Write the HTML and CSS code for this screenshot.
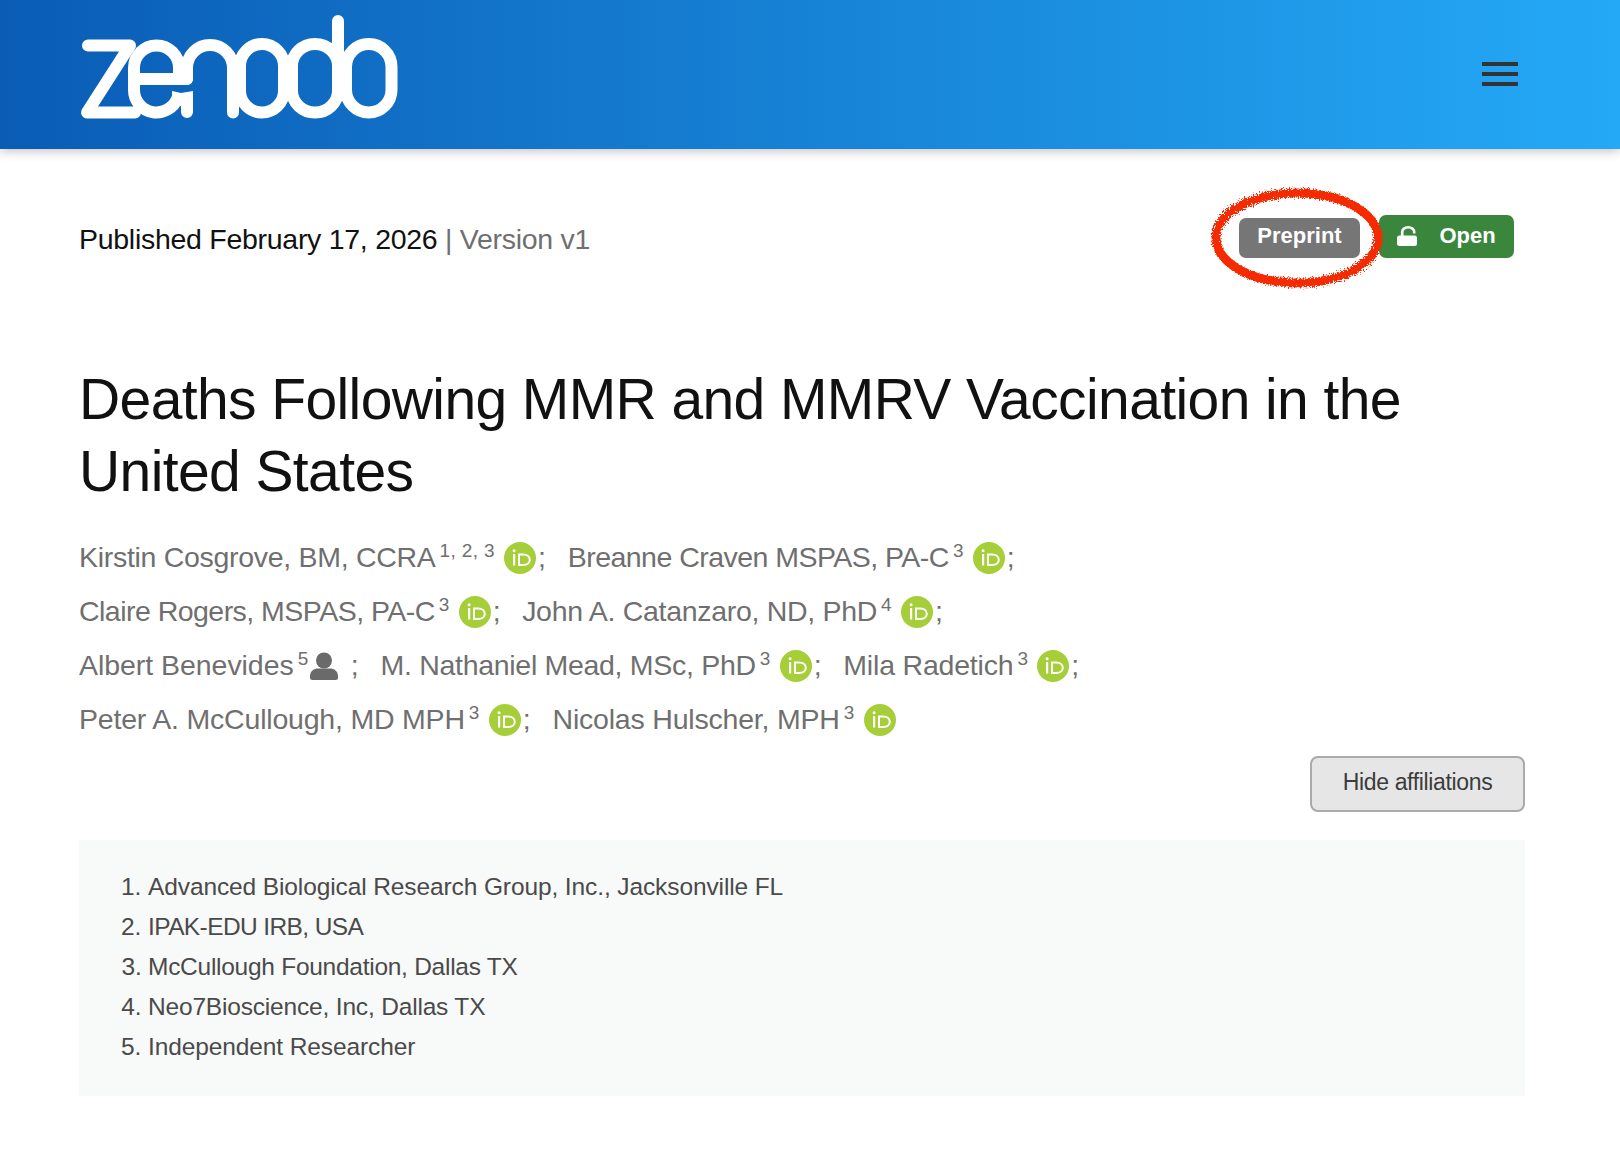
FILE: index.html
```html
<!DOCTYPE HTML>
<html>
<head>
    <meta charset="utf-8">
    <title>Zenodo</title>
    <link rel="stylesheet" href="styles.css">
</head>
<body>
<svg class="icon-defs" width="0" height="0">
    <symbol id="orcid" viewBox="0 0 32 32">
        <circle cx="16" cy="16" r="16" fill="#a6ce39"/>
        <rect x="9" y="12" width="2.200" height="11.500" fill="#fff"/>
        <circle cx="10.100" cy="8.800" r="1.500" fill="#fff"/>
        <path d="M15 12.500h4.200c4 0 6.600 2.300 6.600 5.250s-2.600 5.250-6.600 5.250h-4.200z" fill="none" stroke="#fff" stroke-width="2"/>
    </symbol>
</svg>

<header class="topbar">
    <svg class="logo" viewBox="0 0 340 110" role="img" aria-label="zenodo">
        <g transform="translate(-75,-10)" fill="none" stroke="#fff" stroke-width="12" stroke-linecap="round" stroke-linejoin="round">
            <path d="M88 45.500H130L87 112.500H135"/>
            <path d="M187 79H134V68A22.500 22.500 0 0 1 179 68V79"/>
            <path d="M134 79V90A22.500 22.500 0 0 0 177.500 98" stroke-linecap="butt"/>
            <path d="M187 79V68A23 23 0 0 1 233 68V112.500"/>
            <path d="M172 91L181 93L193 91V112A6 6 0 0 1 181 112V106L172 104Z" fill="#fff" stroke="none"/>
            <rect x="240" y="44" width="44" height="68.500" rx="22"/>
            <path d="M338 21V90.500A23 22 0 0 1 292 90.500V66A23 22 0 0 1 338 66"/>
            <rect x="346" y="44" width="45.500" height="68.500" rx="22.700"/>
        </g>
    </svg>
    <button class="burger" type="button" aria-label="Menu"><span></span><span></span><span></span></button>
</header>

<main class="record">
    <div class="meta-row">
        <p class="published">Published February 17, 2026 <span class="version">| Version v1</span></p>
        <div class="badges">
            <span class="badge badge-type">Preprint</span>
            <span class="badge badge-open">
                <svg class="lock" viewBox="0 0 20 20">
                    <rect x="0" y="9.500" width="20" height="10.500" rx="2.500" fill="#fff"/>
                    <path d="M5.200 10V5.800a6 4.500 0 0 1 12 0V7.500" fill="none" stroke="#fff" stroke-width="2.600"/>
                </svg>
                Open
            </span>
            <svg class="scribble" viewBox="0 0 190 120">
                <defs>
                    <filter id="rough" x="-10%" y="-10%" width="120%" height="120%">
                        <feTurbulence type="fractalNoise" baseFrequency="0.8" numOctaves="2" seed="4"/>
                        <feDisplacementMap in="SourceGraphic" scale="8"/>
                    </filter>
                </defs>
                <ellipse cx="95" cy="60" rx="81" ry="45" fill="none" stroke="#f52a05" stroke-width="9" filter="url(#rough)"/>
            </svg>
        </div>
    </div>

    <h1 class="title">Deaths Following MMR and MMRV Vaccination in the United States</h1>

    <div class="creators">
        <div class="creator-line">
            <span class="creator">Kirstin Cosgrove, BM, CCRA<sup>1, 2, 3</sup><svg class="orcid"><use href="#orcid"/></svg>;</span>
            <span class="creator creator-tight">Breanne Craven MSPAS, PA-C<sup>3</sup><svg class="orcid"><use href="#orcid"/></svg>;</span>
        </div>
        <div class="creator-line">
            <span class="creator creator-tight">Claire Rogers, MSPAS, PA-C<sup>3</sup><svg class="orcid"><use href="#orcid"/></svg>;</span>
            <span class="creator">John A. Catanzaro, ND, PhD<sup>4</sup><svg class="orcid"><use href="#orcid"/></svg>;</span>
        </div>
        <div class="creator-line">
            <span class="creator creator-albert">Albert Benevides<sup>5</sup><svg class="person" viewBox="0 0 28 28"><circle cx="14" cy="8.500" r="8"/><path d="M0 24c0-5 4-7.500 8-7.500h12c4 0 8 2.500 8 7.500v1.500a2.500 2.500 0 0 1-2.500 2.500h-23a2.500 2.500 0 0 1-2.500-2.500z"/></svg><span class="person-sep">;</span></span>
            <span class="creator">M. Nathaniel Mead, MSc, PhD<sup>3</sup><svg class="orcid"><use href="#orcid"/></svg>;</span>
            <span class="creator creator-wide">Mila Radetich<sup>3</sup><svg class="orcid"><use href="#orcid"/></svg>;</span>
        </div>
        <div class="creator-line">
            <span class="creator creator-wide">Peter A. McCullough, MD MPH<sup>3</sup><svg class="orcid"><use href="#orcid"/></svg>;</span>
            <span class="creator creator-wide">Nicolas Hulscher, MPH<sup>3</sup><svg class="orcid"><use href="#orcid"/></svg></span>
        </div>
    </div>

    <div class="affil-toggle">
        <button class="btn-hide" type="button">Hide affiliations</button>
    </div>

    <section class="affiliations">
        <ol>
            <li>Advanced Biological Research Group, Inc., Jacksonville FL</li>
            <li><span class="affil-tight">IPAK-EDU IRB, USA</span></li>
            <li>McCullough Foundation, Dallas TX</li>
            <li>Neo7Bioscience, Inc, Dallas TX</li>
            <li>Independent Researcher</li>
        </ol>
    </section>
</main>
</body>
</html>
```

FILE: styles.css
```css
body, html {
    margin: 0;
    padding: 0;
    background-color: #ffffff;
    font-family: "Liberation Sans", Arial, sans-serif;
}

.icon-defs {
    position: absolute;
}

.topbar {
    height: 149px;
    padding: 0 102px 0 75px;
    display: flex;
    align-items: flex-start;
    justify-content: space-between;
    background: linear-gradient(90deg, #0a5cb5, #24a9f6);
    box-shadow: 0 2px 10px rgba(0, 0, 0, 0.25);
    position: relative;
}

.logo {
    width: 340px;
    height: 110px;
    margin-top: 10px;
}

.burger {
    margin-top: 62px;
    padding: 0;
    width: 36px;
    display: flex;
    flex-direction: column;
    gap: 6px;
    background: none;
    border: none;
}

.burger span {
    display: block;
    height: 4px;
    background-color: #333333;
}

.record {
    padding: 66px 95px 0 79px;
}

.meta-row {
    display: flex;
    justify-content: space-between;
    align-items: flex-start;
    height: 148px;
}

.published {
    margin: 3px 0 0;
    font-size: 28.500px;
    letter-spacing: -0.28px;
    line-height: 42px;
    color: #111111;
}

.version {
    color: #6f6f6f;
}

.badges {
    display: flex;
    align-items: flex-end;
    gap: 19px;
    padding-right: 11px;
    position: relative;
}

.badge {
    display: flex;
    align-items: center;
    justify-content: center;
    box-sizing: border-box;
    color: #ffffff;
    font-weight: bold;
    font-size: 22px;
    border-radius: 7px;
    padding-bottom: 4px;
}

.badge-type {
    width: 121px;
    height: 40px;
    background-color: #767676;
}

.badge-open {
    width: 135px;
    height: 43px;
    gap: 22px;
    padding-bottom: 2px;
    background-color: #3a863d;
}

.lock {
    width: 20px;
    height: 20px;
}

.scribble {
    position: absolute;
    left: -37px;
    top: -37px;
    width: 190px;
    height: 120px;
}

.title {
    margin: 0;
    font-weight: normal;
    font-size: 57px;
    letter-spacing: -0.6px;
    line-height: 72px;
    color: #111111;
}

.creators {
    margin-top: 23px;
    font-size: 28.500px;
    letter-spacing: -0.3px;
    color: #6f6f6f;
}

.creator-line {
    height: 54px;
    display: flex;
    align-items: center;
    gap: 22px;
}

.creator {
    display: inline-flex;
    align-items: center;
}

.creator-tight {
    letter-spacing: -0.53px;
}

.creator-wide {
    letter-spacing: -0.2px;
}

.creator-albert {
    letter-spacing: -0.05px;
}

.creator sup {
    font-size: 19px;
    letter-spacing: 0.4px;
    line-height: 1;
    margin: 0 0 14px 4px;
}

.orcid {
    width: 32px;
    height: 32px;
    margin: 2px 2px 0 9px;
}

.person {
    width: 28px;
    height: 28px;
    margin: 2px 0 0 1px;
    fill: #6a6a6a;
}

.person-sep {
    margin-left: 13px;
}

.affil-toggle {
    margin-top: 10px;
    display: flex;
    justify-content: flex-end;
}

.btn-hide {
    width: 215px;
    height: 56px;
    padding: 0 0 3px;
    background-color: #e6e6e6;
    border: 2px solid #aaaaaa;
    border-radius: 8px;
    font-family: inherit;
    font-size: 23px;
    letter-spacing: -0.35px;
    color: #3c3c3c;
}

.affiliations {
    margin-top: 28px;
    height: 256px;
    background-color: #f8f9f9;
    box-sizing: border-box;
    padding: 27px 0 0 69px;
}

.affiliations ol {
    margin: 0;
    padding: 0;
    font-size: 24.500px;
    letter-spacing: -0.11px;
    line-height: 40px;
    color: #4a4a4a;
}

.affil-tight {
    letter-spacing: -0.6px;
}

.affiliations li:nth-child(3) {
    letter-spacing: -0.27px;
}

.affiliations li:nth-child(4) {
    letter-spacing: -0.18px;
}
```
